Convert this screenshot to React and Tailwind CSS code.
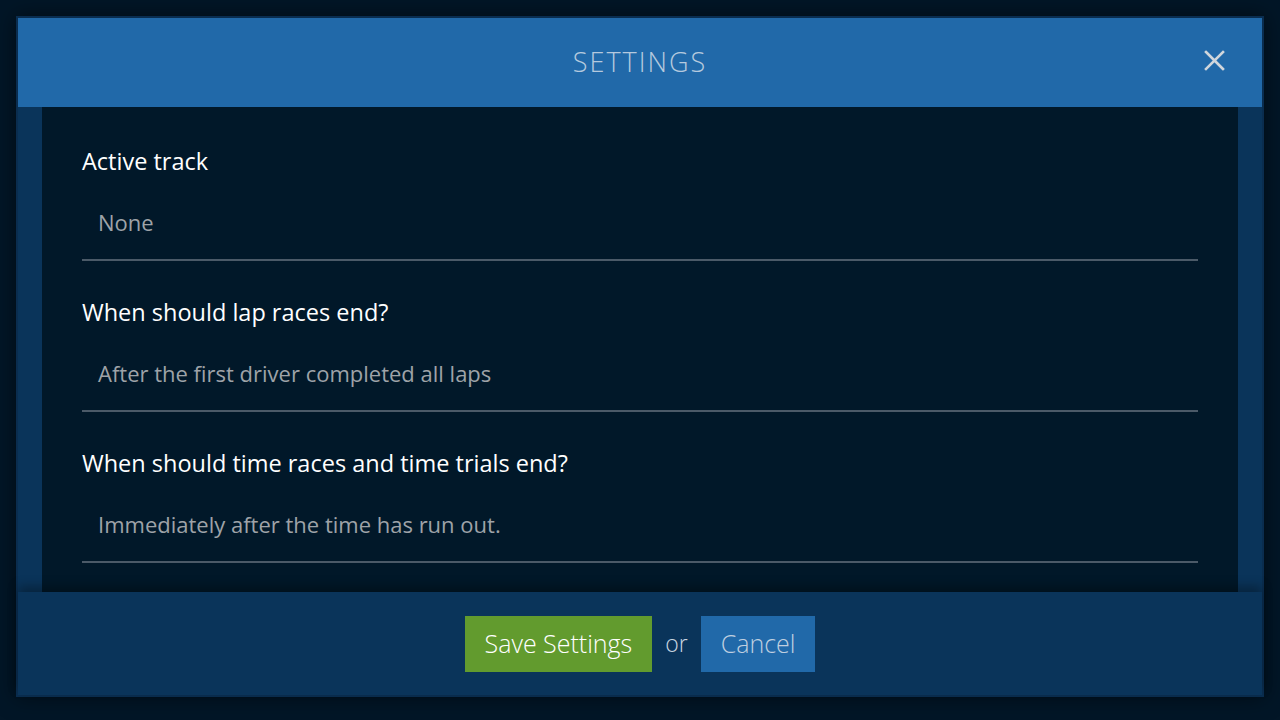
import React from 'react';

const FONT = { fontFamily: '"Open Sans", "Noto Sans", sans-serif' };

const settings = [
  { label: 'Active track', value: 'None' },
  { label: 'When should lap races end?', value: 'After the first driver completed all laps' },
  { label: 'When should time races and time trials end?', value: 'Immediately after the time has run out.' },
];

function Field({ label, value }) {
  return (
    <div className="pt-[36px]">
      <div className="text-[23.5px] leading-[30px] text-white">{label}</div>
      <div className="h-[85px] flex items-end pl-4 pb-[23px] border-b-2 border-[#4b5a68] text-[22px] leading-[27px] text-[#9ea3a8]">
        {value}
      </div>
    </div>
  );
}

export default function App() {
  return (
    <div className="w-[1280px] h-[720px] bg-[#021627] p-4" style={FONT}>
      <div className="h-[681px] flex flex-col border-2 border-[#0a2d4f] shadow-[0_0_20px_rgba(0,0,0,0.5)]">
        <div className="h-[89px] shrink-0 bg-[#2169a9] flex items-center justify-center relative">
          <h1 className="text-[27px] font-light tracking-[2px] text-[#b5c9de]">SETTINGS</h1>
          <button className="absolute right-[37px] top-[32px] text-[#d0d6dc]">
            <svg width="21" height="21" viewBox="0 0 21 21" fill="none" stroke="currentColor" strokeWidth="2.6" strokeLinecap="square">
              <path d="M2 2 L19 19 M19 2 L2 19" />
            </svg>
          </button>
        </div>
        <div className="flex-1 bg-[#0a345a] px-6 flex">
          <div className="flex-1 bg-[#011829] px-10 pt-[3px]">
            {settings.map((s) => (
              <Field key={s.label} label={s.label} value={s.value} />
            ))}
          </div>
        </div>
        <div className="h-[103px] shrink-0 bg-[#0a345a] flex items-center justify-center gap-[13px] relative z-10 shadow-[0_-6px_10px_rgba(0,0,0,0.3)]">
          <button className="h-[56px] px-5 bg-[#629b2e] text-white text-[25px] font-light">Save Settings</button>
          <span className="text-[23px] text-[#c8d4e0] font-light">or</span>
          <button className="h-[56px] px-5 bg-[#2169a9] text-[#bfcfe0] text-[25px] font-light">Cancel</button>
        </div>
      </div>
    </div>
  );
}
